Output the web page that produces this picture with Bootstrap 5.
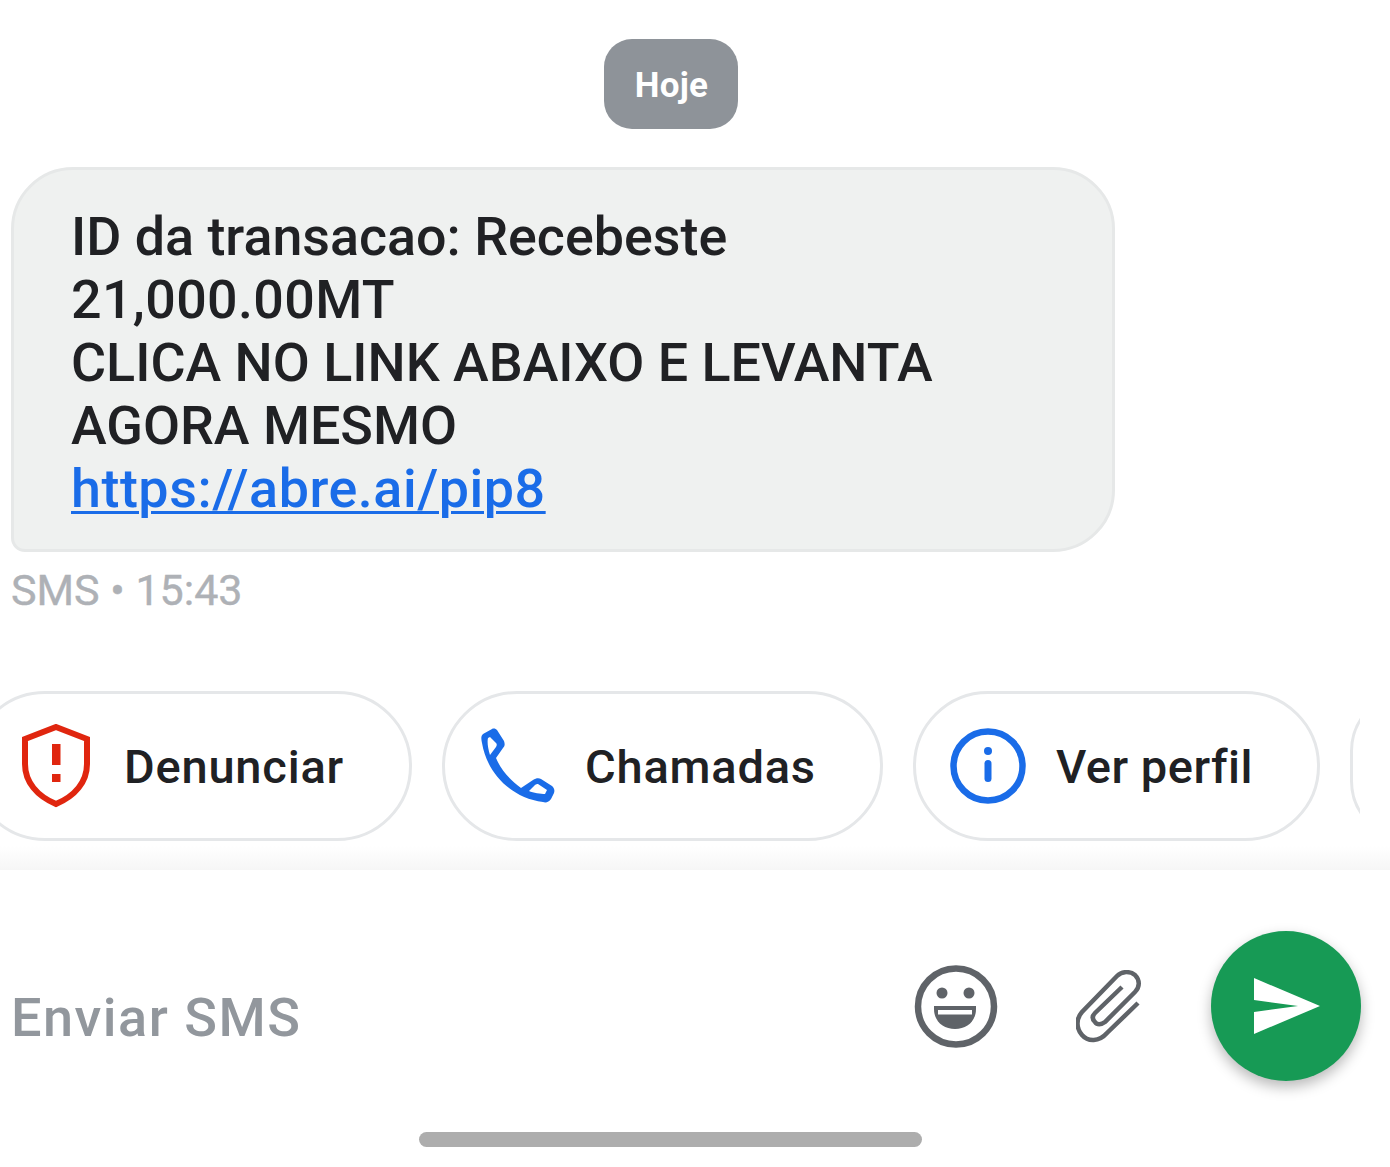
<!DOCTYPE html>
<html lang="pt">
<head>
<meta charset="utf-8">
<title>SMS</title>
<link href="https://cdn.jsdelivr.net/npm/bootstrap@5.3.0/dist/css/bootstrap.min.css" rel="stylesheet">
<style>
html,body{width:1390px;height:1167px;overflow:hidden;background:#fff}
body{font-family:Roboto,"Liberation Sans",sans-serif;color:#202124}
.screen{width:1390px;height:1167px;overflow:hidden}
.screen>*{flex:none}
.date-row{padding:39px 47px 0 0;height:167px}
.date-pill{width:134px;height:90px;border-radius:28px;background:#8e9399;color:#fff;font-size:35px;font-weight:700;letter-spacing:.2px;padding:5px 0 0 1px;margin-right:1px}
.bubble{margin-left:11px;width:1104px;height:385px;background:#eff1f0;border:3px solid #e6e8e8;border-radius:62px 62px 62px 14px;padding:35px 57px 0;font-size:53.8px;font-weight:500;line-height:63px;white-space:nowrap}
.bubble a{color:#1a6ce8;letter-spacing:.55px;text-decoration-thickness:3px;text-underline-offset:4px}
.amount{letter-spacing:.35px}
.meta{margin:15px 0 0 11px;font-size:43px;line-height:46px;color:#aeb1b6;-webkit-text-stroke:.4px #aeb1b6}
.chips{margin:78px 0 0 -30px;width:1390px;height:150px;gap:30px;overflow:hidden}
.chip{flex:none;height:150px;border:3px solid #e5e7e9;border-radius:75px;background:#fff;font-size:47px;font-weight:500;letter-spacing:.8px;color:#202124}
.chip span{padding-top:2px}
.chip-a{width:442px;padding-left:48px;gap:33px}
.chip-b{width:441px;padding-left:36px;gap:28px}
.chip-c{width:407px;padding-left:34px;gap:30px;letter-spacing:.5px}
.chip-d{width:120px}
.fade-strip{height:24px;margin-top:5px;background:linear-gradient(#fff,#f6f6f6)}
.composer{height:262px;padding:61px 29px 0 0}
.hint{font-size:54px;line-height:64px;font-weight:500;letter-spacing:1.5px;color:#92979d;margin:55px 0 0 11px}
.send{flex:none;width:150px;height:150px;border-radius:50%;background:#179a55;box-shadow:0 6px 14px rgba(0,0,0,.28)}
.send svg{margin-left:2px}
.tool-a{flex:none;margin:34px 78px 0 0}
.tool-b{flex:none;margin:39px 70px 0 0}
.home-bar{width:503px;height:15px;border-radius:8px;background:#adadad;margin-left:419px}
</style>
</head>
<body>
<main class="screen d-flex flex-column">
  <div class="date-row d-flex justify-content-center">
    <div class="date-pill d-flex align-items-center justify-content-center">Hoje</div>
  </div>
  <div class="bubble">ID da transacao: Recebeste<br><span class="amount">21,000.00MT</span><br>CLICA NO LINK ABAIXO E LEVANTA<br>AGORA MESMO<br><a href="#">https://abre.ai/pip8</a></div>
  <div class="meta">SMS • 15:43</div>
  <div class="chips d-flex">
    <div class="chip chip-a d-flex align-items-center">
      <svg width="70" height="84" viewBox="0 0 70 84"><path d="M35 3 L66 15 V40 C66 58 54 72 35 80 C16 72 4 58 4 40 V15 Z" fill="none" stroke="#e0260f" stroke-width="6"/><rect x="31" y="20" width="8.500" height="21" fill="#e0260f"/><rect x="31" y="50" width="8.500" height="8" fill="#e0260f"/></svg>
      <span>Denunciar</span>
    </div>
    <div class="chip chip-b d-flex align-items-center">
      <svg width="76" height="76" viewBox="0 0 76 76"><path fill="#1a6ce8" fill-rule="evenodd" d="M11 1 C13 0 15 1 16 2 L23 13 C24 16 24 18 22 20 L15 30 C20 42 29 52 40 60 L52 52 C55 50 58 50 60 51 L71 58 C73 60 74 62 73 65 L70 71 C68 74 65 75 62 74 C30 70 6 45 1 15 C0 10 0 8 2 6 Z M9 9 L7 10 C6 14 7 20 9 27 L15 19 C16 17 16 16 15 15 Z M48 63 C52 65 60 66 64 66 L66 62 L57 56 C56 56 55 56 54 57 Z"/></svg>
      <span>Chamadas</span>
    </div>
    <div class="chip chip-c d-flex align-items-center">
      <svg width="76" height="76" viewBox="0 0 76 76"><circle cx="38" cy="38" r="34.500" fill="none" stroke="#1a6ce8" stroke-width="6.500"/><circle cx="38" cy="23" r="4" fill="#1a6ce8"/><rect x="34.500" y="32" width="7" height="22" rx="3.500" fill="#1a6ce8"/></svg>
      <span>Ver perfil</span>
    </div>
    <div class="chip chip-d"></div>
  </div>
  <div class="fade-strip"></div>
  <div class="composer d-flex align-items-start">
    <div class="hint flex-grow-1">Enviar SMS</div>
    <svg class="tool-a" width="84" height="84" viewBox="0 0 84 84"><circle cx="42" cy="41.500" r="38" fill="none" stroke="#5f6368" stroke-width="6.500"/><circle cx="28" cy="28" r="5.500" fill="#5f6368"/><circle cx="55" cy="28" r="5.500" fill="#5f6368"/><path d="M20 41 H62 V44 C62 56 53 64 41 64 C29 64 20 56 20 44 Z" fill="#5f6368"/><rect x="24" y="45" width="34" height="4.500" fill="#fff"/></svg>
    <svg class="tool-b" width="65" height="74" viewBox="0 0 65 74"><path d="M62 33 L31 63 C23 72 12 72 6 65 C0 58 0 49 6 42 L41 6 C46 1 54 1 59 5 C64 10 64 17 59 22 L29 52 C25 55 21 55 19 52 C16 49 16 46 19 43 L46 17" fill="none" stroke="#5f6368" stroke-width="4.500"/></svg>
    <div class="send d-flex align-items-center justify-content-center">
      <svg width="66" height="56" viewBox="0 0 66 56"><path d="M0 0 L66 28 L0 56 V34 L44 28 L0 22 Z" fill="#fff"/></svg>
    </div>
  </div>
  <div class="home-bar"></div>
</main>
</body>
</html>
